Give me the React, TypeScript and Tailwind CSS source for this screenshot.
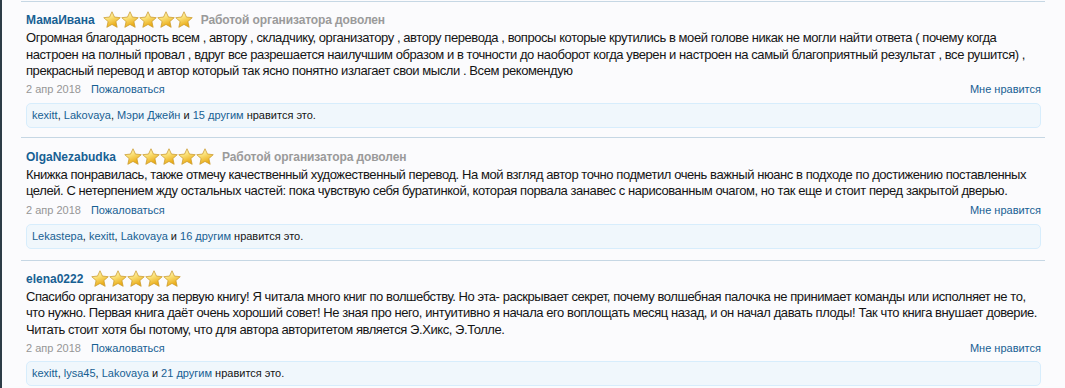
import React from "react";

type Post = {
  user: string;
  rating?: string;
  lines: string[];
  likes: { names: string[]; others: string };
};

const posts: Post[] = [
  {
    user: "МамаИвана",
    rating: "Работой организатора доволен",
    lines: [
      "Огромная благодарность всем , автору , складчику, организатору , автору перевода , вопросы которые крутились в моей голове никак не могли найти ответа ( почему когда",
      "настроен на полный провал , вдруг все разрешается наилучшим образом и в точности до наоборот когда уверен и настроен на самый благоприятный результат , все рушится) ,",
      "прекрасный перевод и автор который так ясно понятно излагает свои мысли . Всем рекомендую",
    ],
    likes: { names: ["kexitt", "Lakovaya", "Мэри Джейн"], others: "15 другим" },
  },
  {
    user: "OlgaNezabudka",
    rating: "Работой организатора доволен",
    lines: [
      "Книжка понравилась, также отмечу качественный художественный перевод. На мой взгляд автор точно подметил очень важный нюанс в подходе по достижению поставленных",
      "целей. С нетерпением жду остальных частей: пока чувствую себя буратинкой, которая порвала занавес с нарисованным очагом, но так еще и стоит перед закрытой дверью.",
    ],
    likes: { names: ["Lekastepa", "kexitt", "Lakovaya"], others: "16 другим" },
  },
  {
    user: "elena0222",
    lines: [
      "Спасибо организатору за первую книгу! Я читала много книг по волшебству. Но эта- раскрывает секрет, почему волшебная палочка не принимает команды или исполняет не то,",
      "что нужно. Первая книга даёт очень хороший совет! Не зная про него, интуитивно я начала его воплощать месяц назад, и он начал давать плоды! Так что книга внушает доверие.",
      "Читать стоит хотя бы потому, что для автора авторитетом является Э.Хикс, Э.Толле.",
    ],
    likes: { names: ["kexitt", "lysa45", "Lakovaya"], others: "21 другим" },
  },
];

function Star({ id }: { id: string }) {
  return (
    <svg width="18" height="18" viewBox="0 0 24 24" className="shrink-0">
      <defs>
        <linearGradient id={id} x1="0" y1="0" x2="0.4" y2="1">
          <stop offset="0" stopColor="#fffbe0" />
          <stop offset="0.45" stopColor="#fbe27a" />
          <stop offset="1" stopColor="#e9a913" />
        </linearGradient>
      </defs>
      <path
        d="M12 1l3.3 7.1 7.7.8-5.8 5.2 1.7 7.7L12 17.9l-6.9 3.9 1.7-7.7L1 8.9l7.7-.8z"
        fill={`url(#${id})`}
        stroke="#c99a2c"
        strokeWidth="1"
        strokeLinejoin="round"
      />
    </svg>
  );
}

function Stars({ pid }: { pid: number }) {
  return (
    <div className="flex items-center">
      {[0, 1, 2, 3, 4].map((i) => (
        <Star key={i} id={`g${pid}-${i}`} />
      ))}
    </div>
  );
}

export default function App() {
  return (
    <div
      className="flex min-h-[388px] w-full bg-[#fbfbfd]"
      style={{ fontFamily: '"Liberation Sans", Arial, sans-serif' }}
    >
      <div className="w-[2px] shrink-0 bg-[#2d3c47]" />
      <div className="ml-[19px] mt-[1px] w-[1024px] self-start border-t border-[#c6d7e4]">
        {posts.map((p, idx) => (
          <div
            key={idx}
            className={`border-b border-[#c6d7e4] pl-[5px] pr-[4px] ${
              idx === 1 ? "pb-[11px] pt-[10px]" : "pb-[9px] pt-[9px]"
            }`}
          >
            <div className="flex h-[18px] items-center gap-[8px]">
              <span className="text-[12px] font-bold text-[#176093]">{p.user}</span>
              <Stars pid={idx} />
              {p.rating && (
                <span className="text-[12px] font-bold tracking-[-0.1px] text-[#9a9a9a]">
                  {p.rating}
                </span>
              )}
            </div>
            <div className="mt-[1px] text-[13px] leading-[16.5px] tracking-[-0.43px] text-[#141414]">
              {p.lines.map((l, i) => (
                <div key={i} className="whitespace-nowrap">
                  {l}
                </div>
              ))}
            </div>
            <div
              className={`flex h-[16px] items-center justify-between text-[11px] ${
                idx === 1 ? "mt-[3px]" : "mt-[2px]"
              }`}
            >
              <div className="flex items-center gap-[10px]">
                <span className="text-[#969696]">2 апр 2018</span>
                <span className="text-[#176093]">Пожаловаться</span>
              </div>
              <span className="text-[#176093]">Мне нравится</span>
            </div>
            <div className="mt-[5px] h-[25px] whitespace-nowrap rounded-[5px] border border-[#d7edfc] bg-[#f0f7fc] px-[5px] text-[11px] leading-[23px] text-[#141414]">
              {p.likes.names.map((n, i) => (
                <React.Fragment key={i}>
                  <span className="text-[#176093]">{n}</span>
                  {i < p.likes.names.length - 1 ? ", " : ""}
                </React.Fragment>
              ))}
              {" и "}
              <span className="text-[#176093]">{p.likes.others}</span>
              {" нравится это."}
            </div>
          </div>
        ))}
      </div>
    </div>
  );
}
